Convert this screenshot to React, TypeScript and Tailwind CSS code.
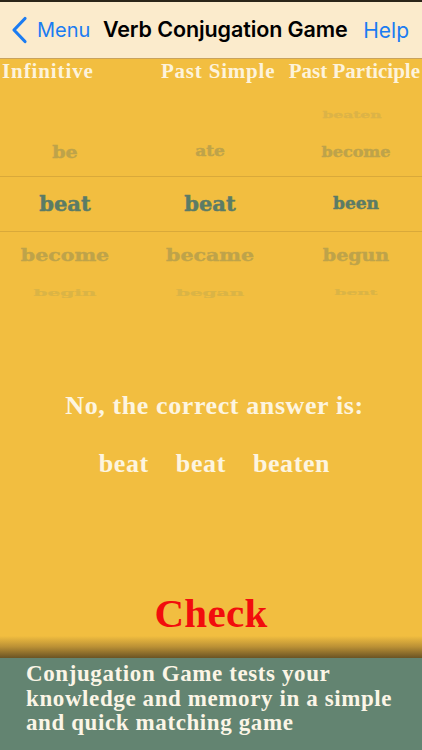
import React from "react";

const serif = { fontFamily: '"Liberation Serif", "DejaVu Serif", serif' };
const slab = { fontFamily: '"DejaVu Serif", "Liberation Serif", serif' };
const sans = { fontFamily: 'Inter, "Liberation Sans", sans-serif' };

function Col({ children, w }: { children?: React.ReactNode; w: string }) {
  return <div className={`${w} flex items-center justify-center whitespace-nowrap`}>{children}</div>;
}

export default function App() {
  return (
    <div className="w-[422px] h-[750px] flex flex-col overflow-hidden bg-[#f2be40]">
      <div className="h-[2px] bg-[#2b2519]" />
      <div
        className="h-[57px] bg-[#fbebcc] border-b border-[#c9a35c] flex items-center justify-between pl-[11px] pr-[12px]"
        style={sans}
      >
        <div className="flex items-center gap-[9px] text-[#1b7cf2]">
          <svg width="17" height="28" viewBox="0 0 17 28" fill="none">
            <path d="M14 2.5 L3 14 L14 25.5" stroke="#1b7cf2" strokeWidth="3.2" strokeLinecap="round" strokeLinejoin="round" />
          </svg>
          <span className="text-[20px] leading-none">Menu</span>
        </div>
        <span className="text-[21.5px] font-semibold text-black leading-none tracking-[-0.1px] pr-[3px]">Verb Conjugation Game</span>
        <span className="text-[21px] text-[#1b7cf2] leading-none pr-[1px]">Help</span>
      </div>

      <div className="flex-1 flex flex-col">
        <div
          className="h-[25px] flex items-center text-[#fdf3dc] text-[21px] font-bold leading-none whitespace-nowrap"
          style={serif}
        >
          <div className="w-[130px] pl-[2px] tracking-[0.9px]">Infinitive</div>
          <div className="w-[160px] flex justify-center pl-[18px] tracking-[0.8px]">Past Simple</div>
          <div className="flex-1 flex justify-end pr-[2px] tracking-[0px]">Past Participle</div>
        </div>

        <div className="mt-[18px] flex flex-col font-bold [-webkit-text-stroke:0.5px_currentColor]" style={slab}>
          <div className="h-[26px] flex text-[#dcb347]">
            <Col w="w-[130px]" />
            <Col w="w-[160px]" />
            <Col w="w-[132px]"><span className="text-[15.5px] inline-block scale-y-[0.55] pr-[8px]">beaten</span></Col>
          </div>
          <div className="h-[48px] flex text-[#bea34a] text-[17px]">
            <Col w="w-[130px]"><span className="inline-block text-[19px] scale-y-[0.85]">be</span></Col>
            <Col w="w-[160px]"><span className="inline-block scale-y-[0.9]">ate</span></Col>
            <Col w="w-[132px]"><span className="inline-block text-[16px] scale-y-[0.95]">become</span></Col>
          </div>
          <div className="h-[56px] flex text-[#5b7b66] text-[21px] border-y border-[#d9a93a]">
            <Col w="w-[130px]">beat</Col>
            <Col w="w-[160px]">beat</Col>
            <Col w="w-[132px]"><span className="text-[17px]">been</span></Col>
          </div>
          <div className="h-[46px] flex text-[#bea34a] text-[20.5px]">
            <Col w="w-[130px]"><span className="inline-block scale-y-[0.8]">become</span></Col>
            <Col w="w-[160px]"><span className="inline-block scale-y-[0.8]">became</span></Col>
            <Col w="w-[132px]"><span className="inline-block text-[19px] scale-y-[0.85]">begun</span></Col>
          </div>
          <div className="h-[30px] flex text-[#dab446] text-[20px]">
            <Col w="w-[130px]"><span className="inline-block scale-y-[0.45]">begin</span></Col>
            <Col w="w-[160px]"><span className="inline-block scale-y-[0.45]">began</span></Col>
            <Col w="w-[132px]"><span className="inline-block text-[17px] scale-y-[0.45]">bent</span></Col>
          </div>
        </div>

        <div className="mt-[82px] flex flex-col items-center pl-[7px] text-[#fdf5e0] font-bold tracking-[0.6px]" style={serif}>
          <div className="h-[30px] flex items-center text-[26px] whitespace-nowrap">No, the correct answer is:</div>
          <div className="mt-[28px] h-[30px] flex items-center gap-[27px] text-[26px]">
            <span>beat</span>
            <span>beat</span>
            <span>beaten</span>
          </div>
        </div>

        <div className="mt-[115px] flex justify-center text-[#f20d0d] text-[41px] font-bold leading-none tracking-[0.3px]" style={serif}>
          Check
        </div>
        <div className="flex-1" />
        <div className="h-[22px] bg-gradient-to-b from-[#f2be4000] via-[#b98f35] to-[#6b5424]" />
      </div>

      <div
        className="h-[92px] bg-[#638471] pl-[26px] pt-[4px] text-[#fbf5e6] text-[23px] font-bold leading-[24.5px] tracking-[0.6px] whitespace-nowrap"
        style={serif}
      >
        Conjugation Game tests your
        <br />
        knowledge and memory in a simple
        <br />
        and quick matching game
      </div>
    </div>
  );
}
